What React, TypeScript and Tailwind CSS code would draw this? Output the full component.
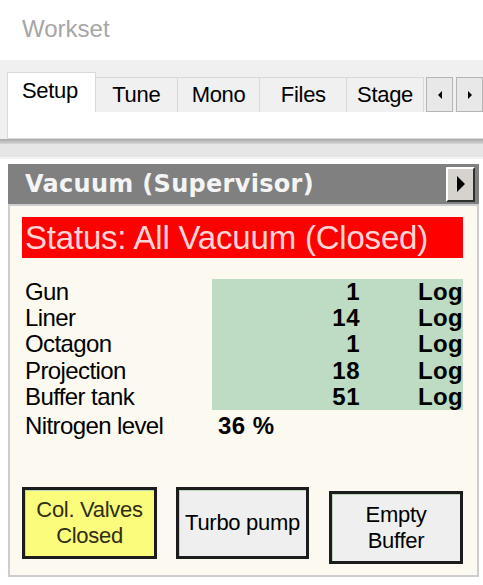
import React from "react";

const tabs = ["Tune", "Mono", "Files", "Stage"];
const tabWidths = ["w-[83px]", "w-[84px]", "w-[88px]", "w-[78px]"];

const readings = [
  { label: "Gun", value: "1" },
  { label: "Liner", value: "14" },
  { label: "Octagon", value: "1" },
  { label: "Projection", value: "18" },
  { label: "Buffer tank", value: "51" },
];

function Triangle({ dir, size = 6 }: { dir: "left" | "right"; size?: number }) {
  return dir === "left" ? (
    <span
      className="block h-0 w-0 border-y-transparent border-r-black"
      style={{ borderTopWidth: size, borderBottomWidth: size, borderRightWidth: size }}
    />
  ) : (
    <span
      className="block h-0 w-0 border-y-transparent border-l-black"
      style={{ borderTopWidth: size, borderBottomWidth: size, borderLeftWidth: size }}
    />
  );
}

export default function App() {
  return (
    <div className="w-[483px] h-[585px] overflow-hidden bg-white font-['Liberation_Sans',Arial,sans-serif] text-black">
      {/* Title */}
      <div className="h-[60px] pl-[22px] pt-[14px] text-[24px] leading-[30px] text-[#a6a6a6]">Workset</div>

      {/* Tab strip */}
      <div className="bg-[#f0f0f0]">
        <div className="flex items-end h-[52px] pl-[7px]">
          <div className="w-[90px] h-[40px] bg-white border-l border-t border-r border-[#d9d9d9] pl-[14px] pt-[5px] text-[22px] leading-[26px] tracking-[-0.3px]">
            Setup
          </div>
          {tabs.map((t, i) => (
            <div
              key={t}
              className={`${tabWidths[i]} h-[35px] bg-[#f0f0f0] border-t border-r border-[#d9d9d9] flex items-center justify-center text-[22px] leading-[26px] tracking-[-0.3px]`}
            >
              {t}
            </div>
          ))}
          <div className="flex h-[35px] ml-[2px] gap-[3px] items-stretch">
            <div className="w-[27px] bg-[#e8e8e8] border border-[#b5b5b5] flex items-center justify-center">
              <Triangle dir="left" size={4} />
            </div>
            <div className="w-[27px] bg-[#e8e8e8] border border-[#b5b5b5] flex items-center justify-center">
              <Triangle dir="right" size={4} />
            </div>
          </div>
        </div>
        <div className="ml-[7px] h-[27px] bg-white border-l border-b border-[#d9d9d9]" />
        <div className="h-[5px] bg-gradient-to-b from-[#a9a9a9] to-[#d4d4d4]" />
        <div className="h-[13px] bg-[#e6e6e6]" />
        <div className="h-[2px] bg-[#f2f2f2]" />
      </div>
      <div className="h-[5px] bg-white" />

      {/* Vacuum panel */}
      <div className="ml-[8px] w-[471px]">
        <div className="h-[40px] bg-[#808080] flex items-center justify-between pl-[17px] pr-[4px]">
          <span className="font-['DejaVu_Sans',sans-serif] font-bold text-[24px] tracking-[0.3px] text-[#f4f4f4]">
            Vacuum (Supervisor)
          </span>
          <div className="w-[29px] h-[35px] bg-[#d6d3ce] border-t-2 border-l-2 border-white border-r-2 border-b-2 border-r-[#303030] border-b-[#303030] flex items-center justify-center">
            <Triangle dir="right" size={8} />
          </div>
        </div>

        <div className="h-[373px] bg-[#fcf9f0] border-2 border-[#cdcdcd] pt-[11px] pl-[12px]">
          <div className="w-[441px] h-[41px] bg-[#ff0000] pl-[3px] text-[33px] leading-[41px] tracking-[-0.2px] text-[#ffd6d6]">
            Status: All Vacuum (Closed)
          </div>

          <div className="flex mt-[21px]">
            <div className="w-[190px] pl-[3px]">
              {readings.map((r) => (
                <div key={r.label} className="h-[26.2px] text-[24px] leading-[26px] tracking-[-0.6px]">
                  {r.label}
                </div>
              ))}
            </div>
            <div className="w-[251px] h-[131px] bg-[#bddcc3]">
              {readings.map((r) => (
                <div key={r.label} className="flex h-[26.2px] text-[24px] leading-[26px] font-bold">
                  <span className="w-[148px] text-right tracking-[0.5px]">{r.value}</span>
                  <span className="w-[103px] text-right tracking-[0.3px]">Log</span>
                </div>
              ))}
            </div>
          </div>
          <div className="flex h-[26px] mt-[3px] text-[24px] leading-[26px]">
            <span className="w-[196px] pl-[3px] tracking-[-0.6px]">Nitrogen level</span>
            <span className="font-bold tracking-[0.5px]">36 %</span>
          </div>

          <div className="flex items-start mt-[48px]">
            <div className="w-[135px] h-[72px] bg-[#fcfc7c] border-[3px] border-[#1c1c1c] shadow-[inset_1px_1px_0_#b8d8b8] flex items-center justify-center text-center text-[22px] leading-[26px] tracking-[-0.3px] text-[#2e2e14]">
              Col. Valves
              <br />
              Closed
            </div>
            <div className="ml-[19px] w-[133px] h-[72px] bg-[#efefef] border-[3px] border-[#1c1c1c] shadow-[inset_1px_1px_0_#b8d8b8] flex items-center justify-center text-center text-[22px] leading-[26px] tracking-[-0.3px]">
              Turbo pump
            </div>
            <div className="ml-[20px] mt-[4px] w-[134px] h-[73px] bg-[#efefef] border-[3px] border-[#1c1c1c] shadow-[inset_1px_1px_0_#b8d8b8] flex items-center justify-center text-center text-[22px] leading-[26px] tracking-[-0.3px]">
              Empty
              <br />
              Buffer
            </div>
          </div>
        </div>
      </div>
    </div>
  );
}
